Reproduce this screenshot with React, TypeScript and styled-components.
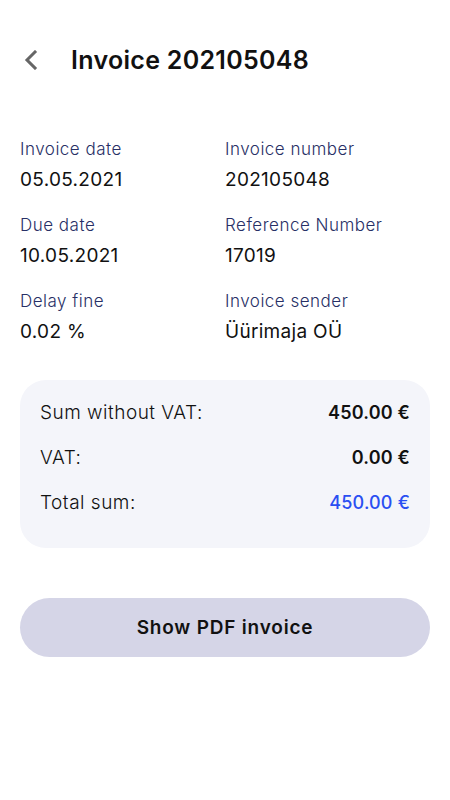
import React from "react";
import styled, { createGlobalStyle } from "styled-components";

const Global = createGlobalStyle`
  html, body { margin: 0; padding: 0; background: #fff; }
  body { font-family: Inter, "Noto Sans", sans-serif; -webkit-font-smoothing: antialiased; }
`;

const Page = styled.div`
  width: 450px;
  min-height: 800px;
  box-sizing: border-box;
  padding: 0 20px;
  display: flex;
  flex-direction: column;
`;

const Header = styled.header`
  display: flex;
  align-items: center;
  height: 60px;
  margin-top: 30px;
  gap: 31px;
`;

const BackButton = styled.button`
  border: none;
  background: none;
  padding: 0;
  margin-left: 2px;
  width: 18px;
  height: 22px;
  display: flex;
  align-items: center;
  justify-content: center;
  cursor: pointer;
`;

const Title = styled.h1`
  margin: 0;
  font-size: 25px;
  font-weight: 600;
  color: #111;
  letter-spacing: 0.3px;
`;

const InfoGrid = styled.div`
  display: grid;
  grid-template-columns: 205px 1fr;
  row-gap: 23px;
  margin-top: 49px;
`;

const Field = styled.div`
  display: flex;
  flex-direction: column;
  gap: 9px;
`;

const Label = styled.span`
  font-size: 17px;
  font-weight: 300;
  color: #283066;
  line-height: 20px;
  letter-spacing: 0.5px;
`;

const Value = styled.span`
  font-size: 19px;
  font-weight: 400;
  color: #111;
  line-height: 24px;
  letter-spacing: 0.3px;
`;

const SumCard = styled.div`
  margin-top: 36px;
  background: #f4f5fa;
  border-radius: 26px;
  padding: 22px 20px 34px;
  display: flex;
  flex-direction: column;
  gap: 23px;
`;

const SumRow = styled.div`
  display: flex;
  justify-content: space-between;
  align-items: center;
  line-height: 22px;
`;

const SumLabel = styled.span`
  font-size: 19px;
  font-weight: 300;
  color: #111;
  letter-spacing: 0.5px;
`;

const SumValue = styled.span<{ $accent?: boolean }>`
  font-size: 18px;
  font-weight: ${(p) => (p.$accent ? 500 : 600)};
  color: ${(p) => (p.$accent ? "#2a4ff2" : "#111")};
  letter-spacing: 0.2px;
`;

const PdfButton = styled.button`
  margin-top: 50px;
  height: 59px;
  border: none;
  border-radius: 30px;
  background: #d5d5e7;
  font-family: Inter, "Noto Sans", sans-serif;
  font-size: 19px;
  font-weight: 600;
  color: #111;
  letter-spacing: 0.8px;
  cursor: pointer;
`;

const fields = [
  { label: "Invoice date", value: "05.05.2021" },
  { label: "Invoice number", value: "202105048" },
  { label: "Due date", value: "10.05.2021" },
  { label: "Reference Number", value: "17019" },
  { label: "Delay fine", value: "0.02 %" },
  { label: "Invoice sender", value: "Üürimaja OÜ" },
];

const sums = [
  { label: "Sum without VAT:", value: "450.00 €" },
  { label: "VAT:", value: "0.00 €" },
  { label: "Total sum:", value: "450.00 €", accent: true },
];

export default function App() {
  return (
    <>
      <Global />
      <Page>
        <Header>
          <BackButton aria-label="Back">
            <svg width="16" height="20" viewBox="0 0 16 20">
              <path d="M12 2 L4 10 L12 18" fill="none" stroke="#666" strokeWidth="3" strokeLinecap="square" />
            </svg>
          </BackButton>
          <Title>Invoice 202105048</Title>
        </Header>
        <InfoGrid>
          {fields.map((f) => (
            <Field key={f.label}>
              <Label>{f.label}</Label>
              <Value>{f.value}</Value>
            </Field>
          ))}
        </InfoGrid>
        <SumCard>
          {sums.map((s) => (
            <SumRow key={s.label}>
              <SumLabel>{s.label}</SumLabel>
              <SumValue $accent={s.accent}>{s.value}</SumValue>
            </SumRow>
          ))}
        </SumCard>
        <PdfButton>Show PDF invoice</PdfButton>
      </Page>
    </>
  );
}
